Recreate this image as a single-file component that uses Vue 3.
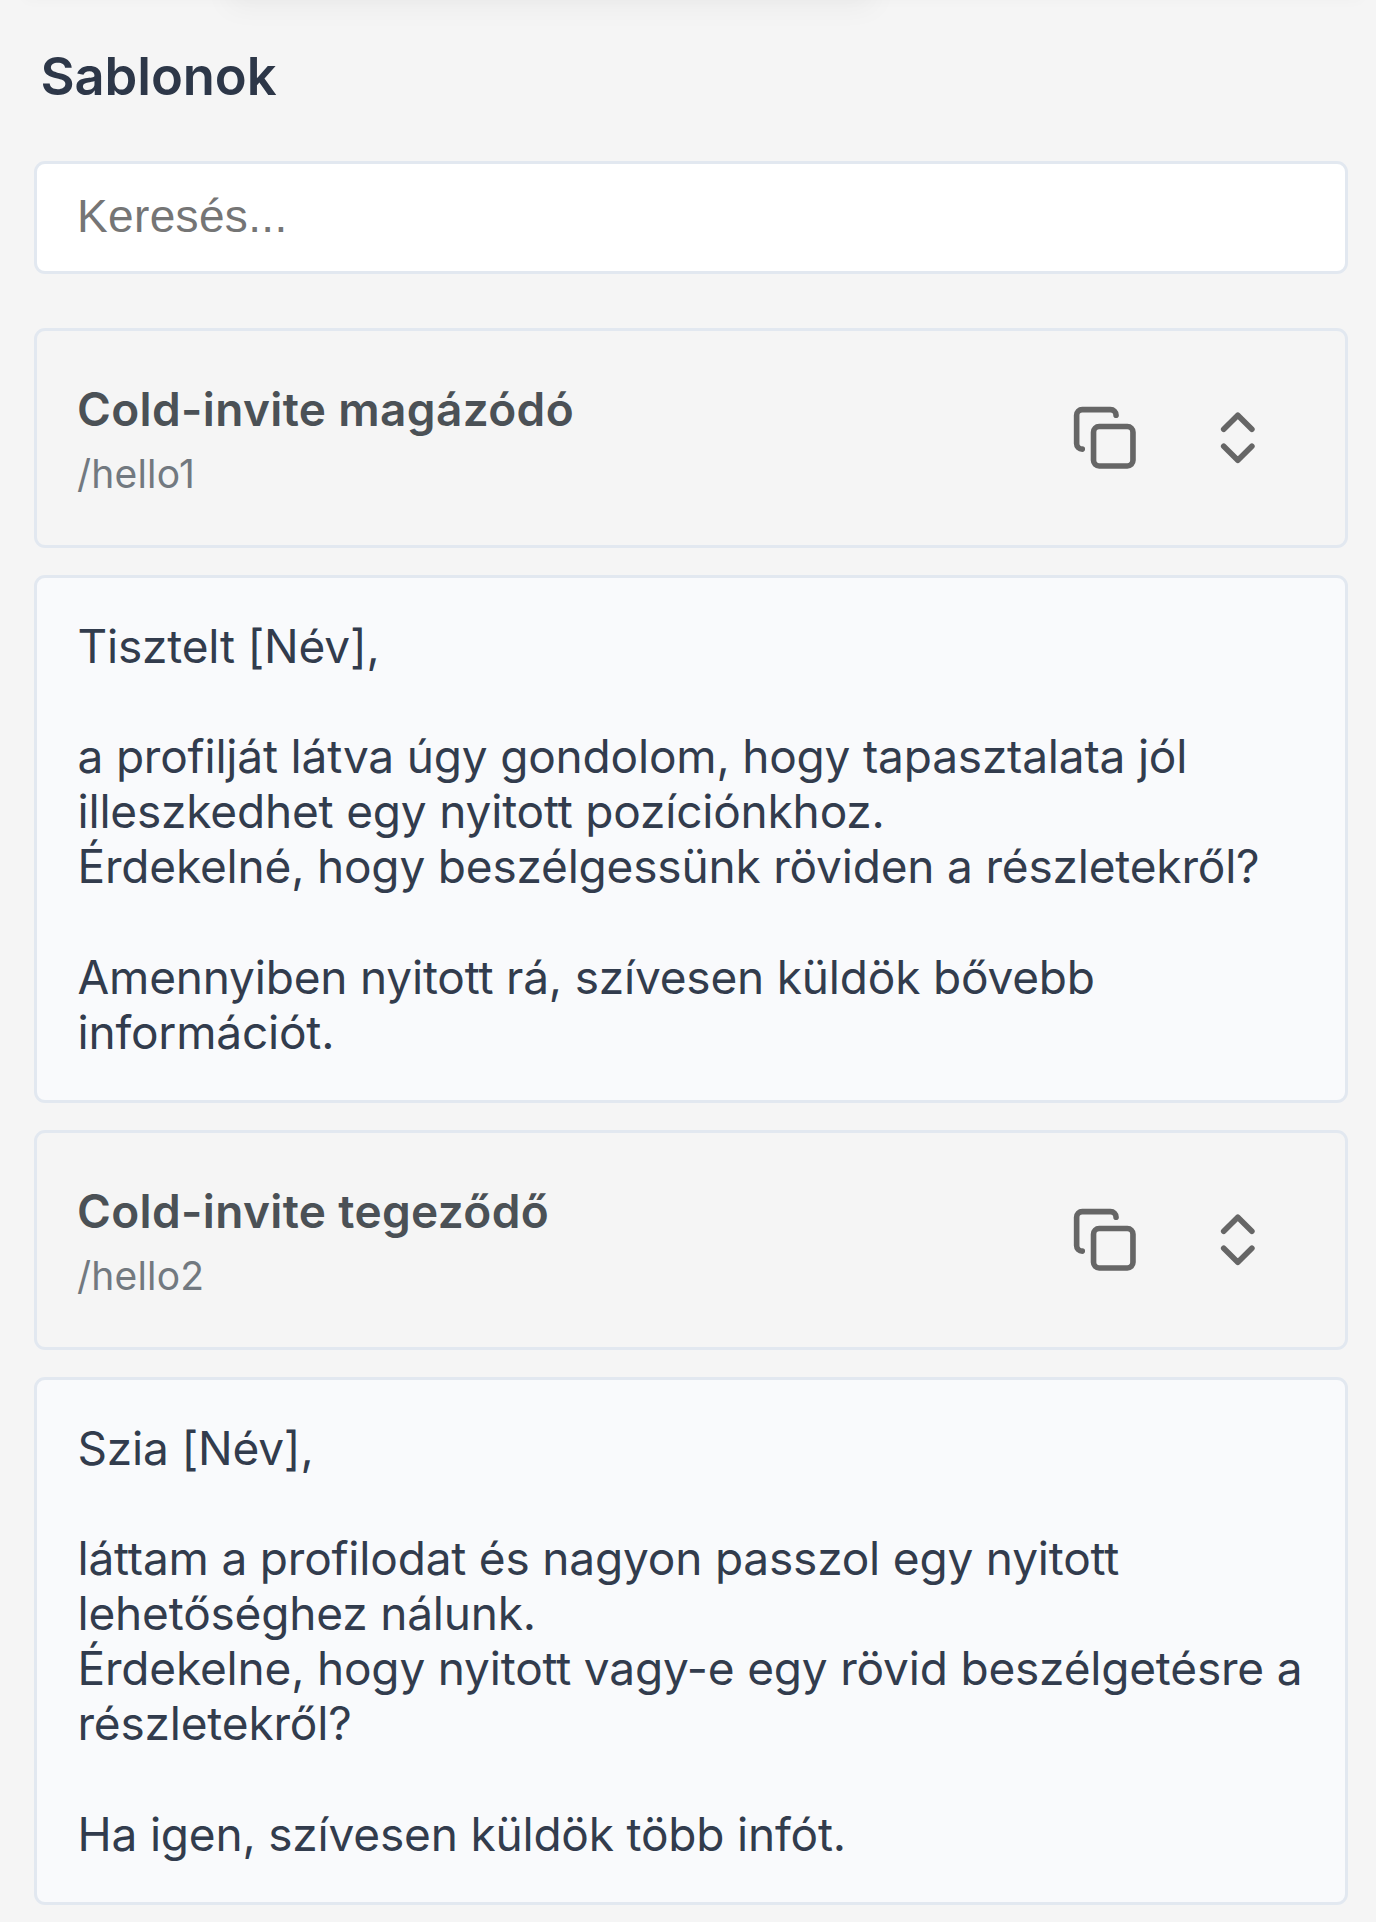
<template>
  <div class="panel">
    <div class="top-shadow"></div>
    <div class="top-shadow narrow"></div>

    <h2 class="panel-title">Sablonok</h2>

    <input type="text" class="search-input" placeholder="Keresés..." v-model="search">

    <div class="template-list">
      <template v-for="item in filtered" :key="item.id">
        <div class="template-card">
          <div class="template-info">
            <div class="template-name">{{ item.name }}</div>
            <div class="template-shortcut">{{ item.shortcut }}</div>
          </div>
          <div class="template-actions">
            <button class="icon-btn" @click="copy(item)">
              <svg viewBox="0 0 24 24">
                <rect x="8" y="8" width="14" height="14" rx="2" ry="2" />
                <path d="M4 16c-1.1 0-2-.9-2-2V4c0-1.1.9-2 2-2h10c1.1 0 2 .9 2 2" />
              </svg>
            </button>
            <button class="icon-btn" @click="item.open = !item.open">
              <svg viewBox="0 0 24 24">
                <path d="m7 15 5 5 5-5" />
                <path d="m7 9 5-5 5 5" />
              </svg>
            </button>
          </div>
        </div>
        <div v-if="item.open" class="template-body">{{ item.text }}</div>
      </template>
    </div>
  </div>
</template>

<script setup>
import { computed, reactive, ref } from 'vue';

const search = ref('');

const templates = reactive([
  {
    id: 'hello1',
    name: 'Cold-invite magázódó',
    shortcut: '/hello1',
    open: true,
    text: `Tisztelt [Név],

a profilját látva úgy gondolom, hogy tapasztalata jól
illeszkedhet egy nyitott pozíciónkhoz.
Érdekelné, hogy beszélgessünk röviden a részletekről?

Amennyiben nyitott rá, szívesen küldök bővebb
információt.`
  },
  {
    id: 'hello2',
    name: 'Cold-invite tegeződő',
    shortcut: '/hello2',
    open: true,
    text: `Szia [Név],

láttam a profilodat és nagyon passzol egy nyitott
lehetőséghez nálunk.
Érdekelne, hogy nyitott vagy-e egy rövid beszélgetésre a
részletekről?

Ha igen, szívesen küldök több infót.`
  }
]);

const filtered = computed(() =>
  templates.filter(t => t.name.toLowerCase().includes(search.value.toLowerCase()))
);

function copy(item) {
  navigator.clipboard?.writeText(item.text);
}
</script>

<style>
body { background: #f5f5f5; }
</style>

<style scoped>
.panel {
  position: relative; box-sizing: border-box; height: 1922px; overflow: hidden;
  padding: 44px 28px 0 34px; background: #f5f5f5;
  font-family: Inter, "Liberation Sans", sans-serif; color: #2d3748;
}

/* soft shadow cast by the bar above the panel */
.top-shadow { position: absolute; top: -20px; left: 24px; right: 14px; height: 20px; box-shadow: 0 2px 12px rgba(0, 0, 0, 0.02); }
.top-shadow.narrow { left: 228px; right: 502px; box-shadow: 0 4px 30px rgba(0, 0, 0, 0.06); }

/* HEADER */
.panel-title { margin: 0 0 53px; padding-left: 6.5px; font-size: 52.5px; line-height: 65px; font-weight: 600; letter-spacing: -0.1px; }
.search-input {
  display: block; box-sizing: border-box; width: 100%; height: 113px; margin: -1px 0 53.5px;
  padding: 0 41px 3px 40px; border: 3px solid #e2e8f0; border-radius: 11px; background: #fff; outline: none;
  font-family: "Liberation Sans", Arial, sans-serif; font-size: 46px; letter-spacing: 0.35px; color: #2d3748;
}
.search-input::placeholder { color: #757575; opacity: 1; }

/* TEMPLATES */
.template-list { display: flex; flex-direction: column; gap: 27px; }
.template-card {
  box-sizing: border-box; height: 220.5px; padding: 0 40px;
  border: 3px solid #e2e8f0; border-radius: 11px;
  display: flex; align-items: center; justify-content: space-between;
}
.template-info { padding-top: 3px; }
.template-name { font-size: 46px; line-height: 56px; font-weight: 600; letter-spacing: 0.35px; color: #4b5156; }
.template-shortcut { margin-top: 13px; font-size: 39px; line-height: 48px; color: #727980; letter-spacing: 0.2px; }
.template-actions { display: flex; }
.icon-btn { display: flex; padding: 33px; border: none; background: transparent; cursor: pointer; }
.icon-btn svg { width: 67.6px; height: 67.6px; fill: none; stroke: #666; stroke-width: 2; stroke-linecap: round; stroke-linejoin: round; }
.template-body {
  box-sizing: border-box; height: 527.5px; padding: 41px 41px 0 40.5px;
  border: 3px solid #e2e8f0; border-radius: 11px; background: #f9fafc;
  font-size: 46px; line-height: 55.1px; letter-spacing: -0.19px; color: #323c4d; white-space: pre;
}
</style>
